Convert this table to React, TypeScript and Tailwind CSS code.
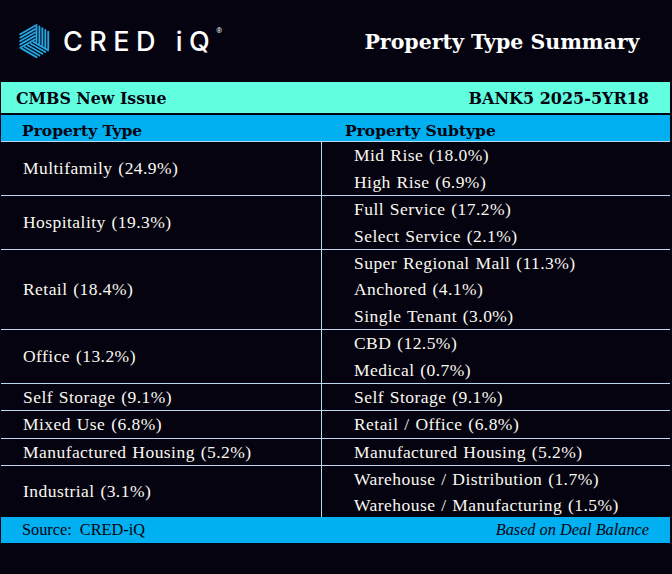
import React from 'react';

type Group = { type: string; subs: string[]; h: number };

// h = content height of the group (px), one top border line each
const groups: Group[] = [
  { type: 'Multifamily (24.9%)', subs: ['Mid Rise (18.0%)', 'High Rise (6.9%)'], h: 53 },
  { type: 'Hospitality (19.3%)', subs: ['Full Service (17.2%)', 'Select Service (2.1%)'], h: 53 },
  { type: 'Retail (18.4%)', subs: ['Super Regional Mall (11.3%)', 'Anchored (4.1%)', 'Single Tenant (3.0%)'], h: 79 },
  { type: 'Office (13.2%)', subs: ['CBD (12.5%)', 'Medical (0.7%)'], h: 53 },
  { type: 'Self Storage (9.1%)', subs: ['Self Storage (9.1%)'], h: 26 },
  { type: 'Mixed Use (6.8%)', subs: ['Retail / Office (6.8%)'], h: 26 },
  { type: 'Manufactured Housing (5.2%)', subs: ['Manufactured Housing (5.2%)'], h: 26 },
  { type: 'Industrial (3.1%)', subs: ['Warehouse / Distribution (1.7%)', 'Warehouse / Manufacturing (1.5%)'], h: 51 },
];

type P = [number, number];
const lerp = (a: P, b: P, t: number): P => [a[0] + (b[0] - a[0]) * t, a[1] + (b[1] - a[1]) * t];

// stripes running from edge a0->a1 to edge b0->b1
function stripes(a0: P, a1: P, b0: P, b1: P, n: number) {
  const out: [P, P][] = [];
  for (let i = 0; i < n; i++) {
    const t = (i + 0.5) / n;
    out.push([lerp(a0, a1, t), lerp(b0, b1, t)]);
  }
  return out;
}

function CubeMark() {
  const c: P = [18, 18];
  const r = 17;
  const v = (deg: number): P => [c[0] + r * Math.cos((deg * Math.PI) / 180), c[1] + r * Math.sin((deg * Math.PI) / 180)];
  const T = v(-90), UR = v(-30), LR = v(30), B = v(90), LL = v(150), UL = v(210);
  const lines = [
    ...stripes(T, UR, c, LR, 5),
    ...stripes(UL, LL, T, c, 5),
    ...stripes(c, LL, LR, B, 5),
  ];
  return (
    <svg width="36" height="36" viewBox="0 0 36 36">
      {lines.map(([a, b], i) => (
        <line key={i} x1={a[0]} y1={a[1]} x2={b[0]} y2={b[1]} stroke="#25a6e3" strokeWidth="1.9" strokeLinecap="round" />
      ))}
    </svg>
  );
}

const serif = "font-['Liberation_Serif',serif]";
const slab = "font-['DejaVu_Serif',serif] font-bold";

export default function App() {
  return (
    <div className="w-[672px] h-[574px] bg-[#04030f] text-[#fbf8ef] overflow-hidden">
      <header className="h-[82px] flex items-center">
        <div className="w-[336px] flex items-center pl-[17px] gap-[10px]">
          <CubeMark />
          <div className="flex items-start">
            <span className="font-['Inter',sans-serif] font-medium text-[27px] tracking-[0.24em] leading-none text-white">CRED iQ</span>
            <span className="text-[7px] -mt-[2px] text-white">®</span>
          </div>
        </div>
        <h1 className={`flex-1 text-center pr-[4px] pt-[2px] text-[20.5px] text-white ${slab}`}>Property Type Summary</h1>
      </header>

      <div className="ml-[1px] w-[669px]">
        <div className="h-[33px] bg-[#61ffe0] text-[#04030f] flex items-center justify-between pt-[2px] pl-[15px] pr-[21px] border-b-2 border-[#04030f]">
          <span className={`text-[15.8px] ${slab}`}>CMBS New Issue</span>
          <span className={`text-[16px] ${slab}`}>BANK5 2025-5YR18</span>
        </div>
        <div className="h-[26px] bg-[#00b0f0] text-[#04030f] grid grid-cols-[321px_1fr] items-center pt-[4px]">
          <span className={`pl-[21px] text-[15.5px] ${slab}`}>Property Type</span>
          <span className={`pl-[23px] text-[15.5px] ${slab}`}>Property Subtype</span>
        </div>

        {groups.map((g) => (
          <div key={g.type} className={`grid grid-cols-[321px_1fr] border-t border-[#bdd7ee] text-[17.5px] tracking-[0.45px] [word-spacing:1px] ${serif}`}>
            <div className="border-r border-[#bdd7ee] flex items-center pl-[22px]">{g.type}</div>
            <div className="flex flex-col" style={{ height: g.h }}>
              {g.subs.map((s) => (
                <div key={s} className="flex-1 flex items-center pl-[32px]">{s}</div>
              ))}
            </div>
          </div>
        ))}

        <div className={`h-[26px] bg-[#00b0f0] text-[#04030f] flex items-center justify-between pl-[21px] pr-[21px] text-[16.3px] ${serif}`}>
          <span className="whitespace-pre">Source:  CRED-iQ</span>
          <span className="italic">Based on Deal Balance</span>
        </div>
      </div>
    </div>
  );
}
